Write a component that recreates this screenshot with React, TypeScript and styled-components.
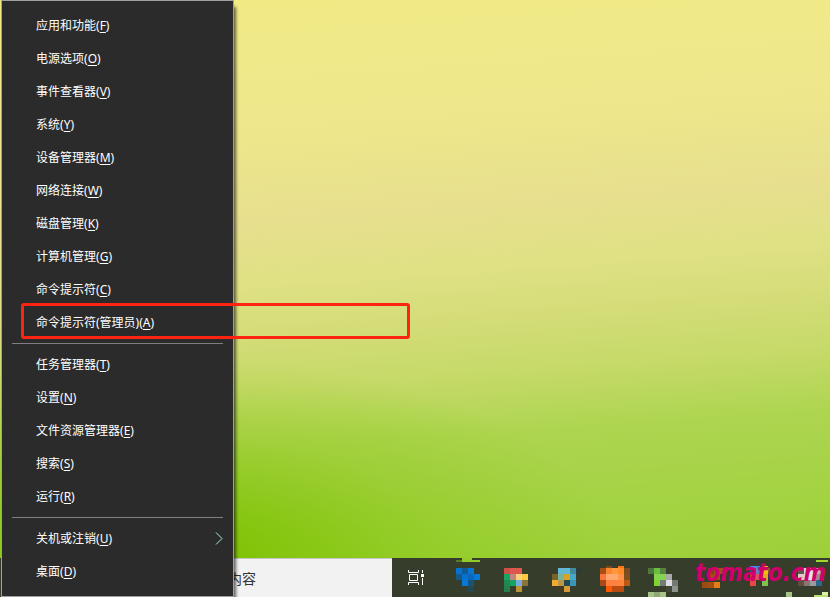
import React from "react";
import styled, { createGlobalStyle } from "styled-components";

const GlobalStyle = createGlobalStyle`
  * { box-sizing: border-box; }
  html, body, #root { height: 100%; }
  body {
    margin: 0;
    overflow: hidden;
    font-family: "Noto Sans", "Noto Sans CJK SC", sans-serif;
  }
`;

const Desktop = styled.main`
  position: relative;
  height: 100%;
  display: flex;
  flex-direction: column;
  overflow: hidden;
`;

const Wallpaper = styled.div`
  flex: 1;
  background:
    radial-gradient(ellipse 440px 200px at 180px 100%, #7cc000 0%, rgba(126, 194, 2, 0.75) 25%, rgba(132, 198, 14, 0.35) 60%, rgba(150, 205, 40, 0) 100%),
    linear-gradient(176deg, #f2e983 0%, #f0e98a 14%, #ede68b 26%, #e7df8e 39%, #dfe184 49%, #d3dc76 58%, #c6da69 66%, #aed550 76%, #a8d34a 83%, #a2d340 91%, #9cd038 100%);
`;

const Taskbar = styled.footer`
  display: flex;
  height: 39px;
  padding-left: 48px;
  background: #363d2b;
`;

const SearchBox = styled.label`
  display: flex;
  width: 344px;
  padding-left: 180px;
  background: #f2f2f2;
  border-top: 1px solid #c6c6c6;
`;

const SearchInput = styled.input`
  width: 100%;
  padding: 0;
  border: 0;
  outline: 0;
  background: transparent;
  color: #333;
  font-family: inherit;
  font-size: 14px;
`;

const TaskButton = styled.button`
  flex: none;
  width: 48px;
  padding: 0;
  border: 0;
  background: transparent;

  svg { display: block; overflow: visible; }
`;

const Menu = styled.nav`
  position: absolute;
  left: 1px;
  top: 0;
  bottom: 0;
  width: 233px;
  padding: 8px 10px 0;
  background: #2b2b2b;
  border: 1px solid #a0a0a0;
  box-shadow: 3px 6px 3px -1px rgba(0, 0, 0, 0.6);
`;

const MenuItem = styled.button`
  display: flex;
  align-items: center;
  justify-content: space-between;
  width: 100%;
  height: 33px;
  padding: 0 0 0 24px;
  border: 0;
  background: transparent;
  color: #fff;
  font-family: inherit;
  font-size: 12px;
  line-height: 18px;
  text-align: left;
`;

const AccessKey = styled.u`
  text-decoration-thickness: 1px;
  text-underline-offset: 2px;
`;

const Separator = styled.hr`
  height: 1px;
  margin: 4px 0;
  border: 0;
  background: #808080;
`;

const Highlight = styled.div`
  position: absolute;
  left: 21px;
  top: 303px;
  width: 389px;
  height: 36px;
  border: 3px solid #ff2412;
  border-radius: 3px;
`;

const Watermark = styled.div`
  position: absolute;
  right: 4px;
  bottom: 8px;
  color: #cf006b;
  font-family: "DejaVu Sans Condensed", "DejaVu Sans", sans-serif;
  font-size: 24px;
  font-style: italic;
  font-weight: 700;
  line-height: 32px;
`;

type Entry = { label: string; accessKey: string; submenu?: boolean };

const groups: Entry[][] = [
  [
    { label: "应用和功能", accessKey: "F" },
    { label: "电源选项", accessKey: "O" },
    { label: "事件查看器", accessKey: "V" },
    { label: "系统", accessKey: "Y" },
    { label: "设备管理器", accessKey: "M" },
    { label: "网络连接", accessKey: "W" },
    { label: "磁盘管理", accessKey: "K" },
    { label: "计算机管理", accessKey: "G" },
    { label: "命令提示符", accessKey: "C" },
    { label: "命令提示符(管理员)", accessKey: "A" },
  ],
  [
    { label: "任务管理器", accessKey: "T" },
    { label: "设置", accessKey: "N" },
    { label: "文件资源管理器", accessKey: "E" },
    { label: "搜索", accessKey: "S" },
    { label: "运行", accessKey: "R" },
  ],
  [
    { label: "关机或注销", accessKey: "U", submenu: true },
    { label: "桌面", accessKey: "D" },
  ],
];

type Cell = [x: number, y: number, color: string, w?: number, h?: number];

const apps: { name: string; cells: Cell[] }[] = [
  {
    name: "App 1",
    cells: [
      [16, 2, "#5b7a24", 6, 2], [22, 0, "#92cc2c", 10, 4], [32, 2, "#92cc2c", 8, 2],
      [16, 10, "#0672cf"], [22, 10, "#145a92"], [28, 10, "#0877d4"],
      [16, 16, "#165a89"], [22, 16, "#0672cf"], [28, 16, "#0a67ba"], [34, 16, "#0878d8"],
      [22, 22, "#0879d9"], [28, 22, "#175479"],
      [28, 28, "#244751"],
    ],
  },
  {
    name: "App 2",
    cells: [
      [16, 10, "#cd5148"], [22, 10, "#de574d", 12],
      [16, 16, "#1aa463"], [22, 16, "#bd8880"], [28, 16, "#ffd27a"], [34, 16, "#ffca41"],
      [16, 22, "#24864f"], [22, 22, "#14a360"], [28, 22, "#78a9dc"], [34, 22, "#88743a"],
      [16, 28, "#24804b"], [28, 28, "#b79532"],
    ],
  },
  {
    name: "App 3",
    cells: [
      [22, 10, "#62b7d3", 12], [34, 10, "#3e8b9e"], [40, 10, "#2d3d35"],
      [16, 16, "#7a602a"], [22, 16, "#79b39a"], [28, 16, "#dba325"], [34, 16, "#48a7c6"],
      [16, 22, "#f1aa32"], [22, 22, "#bd9745"], [28, 22, "#214a53"], [34, 22, "#3b96b5"],
      [22, 28, "#443b23"], [28, 28, "#d69b37"],
    ],
  },
  {
    name: "App 4",
    cells: [
      [22, 8, "#794b1d", 6, 2], [34, 8, "#ff740b", 6, 2],
      [16, 10, "#a54f17"], [22, 10, "#f9862d"], [28, 10, "#ff983d"], [34, 10, "#ff8b29"], [40, 10, "#794d20"],
      [16, 16, "#fa7539"], [22, 16, "#ffa76e", 12], [34, 16, "#ff9448"], [40, 16, "#81501d"],
      [16, 22, "#a94818"], [22, 22, "#ff813f", 12], [34, 22, "#ff853d"], [40, 22, "#bd5915"],
      [22, 28, "#ff5900"], [28, 28, "#b94c13", 12],
    ],
  },
  {
    name: "App 5",
    cells: [
      [16, 10, "#50773b"], [22, 10, "#68be40"], [28, 10, "#578341"],
      [22, 16, "#83d54f", 12], [34, 16, "#aaa8ac"],
      [22, 22, "#7fd332"], [28, 22, "#777b75"], [34, 22, "#dfdde4"], [40, 22, "#747973"],
      [34, 28, "#3f4935"], [40, 28, "#90938c"],
      [16, 34, "#a8c388", 6, 5], [22, 34, "#8fa477", 6, 5], [28, 34, "#a8c388", 6, 5],
    ],
  },
  {
    name: "App 6",
    cells: [
      [28, 10, "#75451b"], [34, 10, "#a0500f", 12], [28, 16, "#9a5015", 12],
      [22, 24, "#9a4b10"], [28, 24, "#a05012"], [34, 24, "#e77b16"],
    ],
  },
  {
    name: "App 7",
    cells: [
      [22, 8, "#4385ed", 10, 2], [34, 8, "#edb512", 6, 2],
      [22, 10, "#31578c"], [28, 10, "#5985bc"], [34, 10, "#f6ba14"], [40, 10, "#7a6420", 2],
      [22, 16, "#df4440"], [28, 16, "#dd5360"], [34, 16, "#e8a81b"],
      [22, 22, "#e84747"], [34, 22, "#7fc24e"],
    ],
  },
  {
    name: "App 8",
    cells: [
      [40, 2, "#9fd62f", 12, 2],
      [22, 10, "#62574e"], [28, 10, "#d8d5d9"], [34, 10, "#e2e0e6"], [40, 10, "#b5b0ae"],
      [22, 16, "#e7c9cc"], [28, 16, "#e2e0e6", 12], [40, 16, "#9c8f8a"],
      [22, 22, "#604e43"], [28, 22, "#89766e"], [34, 22, "#9c9a9a"], [40, 22, "#2c6688"],
      [10, 34, "#a8c388", 6, 5],
      [46, 34, "#d8f0a8", 6, 3], [38, 37, "#b9e070", 14, 2],
    ],
  },
];

function AppMosaic({ cells }: { cells: Cell[] }) {
  return (
    <svg width="48" height="39" viewBox="0 0 48 39" shapeRendering="crispEdges" aria-hidden="true">
      {cells.map(([x, y, color, w = 6, h = 6], i) => (
        <rect key={i} x={x} y={y} width={w} height={h} fill={color} />
      ))}
    </svg>
  );
}

function TaskViewIcon() {
  return (
    <svg width="48" height="39" viewBox="0 0 48 39" fill="none" stroke="#fff" aria-hidden="true">
      <path d="M16.5 12v2.5h10V12M16.5 27v-2.5h10V27M17.5 16.5h8v6h-8zM30.5 12v3M30.5 20v7" />
      <path d="M29 16h3v3h-3z" fill="#fff" stroke="none" />
    </svg>
  );
}

function Chevron() {
  return (
    <svg width="8" height="14" viewBox="0 0 8 14" fill="none" stroke="#a8f0e8" aria-hidden="true">
      <path d="M1 0.5l6 6-6 6" />
    </svg>
  );
}

export default function App() {
  return (
    <Desktop>
      <GlobalStyle />
      <Wallpaper />
      <Taskbar>
        <SearchBox>
          <SearchInput type="text" defaultValue="内容" aria-label="搜索" />
        </SearchBox>
        <TaskButton aria-label="任务视图">
          <TaskViewIcon />
        </TaskButton>
        {apps.map((app) => (
          <TaskButton key={app.name} aria-label={app.name}>
            <AppMosaic cells={app.cells} />
          </TaskButton>
        ))}
      </Taskbar>
      <Menu>
        {groups.map((group, i) => (
          <React.Fragment key={i}>
            {i > 0 && <Separator />}
            {group.map((item) => (
              <MenuItem key={item.accessKey}>
                <span>
                  {item.label}(<AccessKey>{item.accessKey}</AccessKey>)
                </span>
                {item.submenu && <Chevron />}
              </MenuItem>
            ))}
          </React.Fragment>
        ))}
      </Menu>
      <Highlight />
      <Watermark>tomato.cm</Watermark>
    </Desktop>
  );
}
